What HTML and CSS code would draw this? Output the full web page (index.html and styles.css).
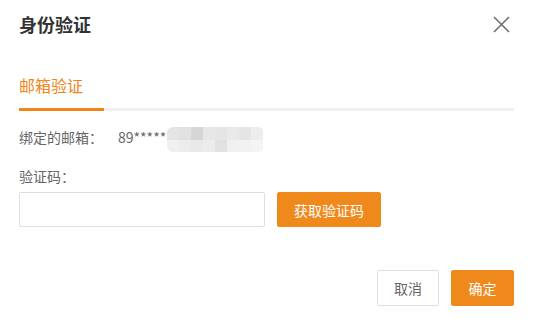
FILE: index.html
```html
<!DOCTYPE html>
<html lang="zh-CN">
<head>
<meta charset="utf-8">
<title>身份验证</title>
<link rel="stylesheet" href="styles.css">
</head>
<body>
<div class="dialog">
  <div class="header">
    <div class="title">身份验证</div>
    <button class="close" aria-label="关闭">
      <svg width="17" height="17" viewBox="0 0 17 17"><path d="M1 1L16 16M16 1L1 16" stroke="#6b6b6b" stroke-width="1.5" fill="none"/></svg>
    </button>
  </div>
  <div class="tabs">
    <div class="tab active">邮箱验证</div>
  </div>
  <div class="email-row">
    <span class="label">绑定的邮箱：</span>
    <span class="value">89*****</span>
    <span class="mosaic">
      <i style="background:#e4e4e4"></i><i style="background:#e1e1e1"></i><i style="background:#d6d6d6"></i><i style="background:#e7e7e7"></i><i style="background:#e5e5e5"></i><i style="background:#e9e9e9"></i><i style="background:#e5e5e5"></i><i style="background:#ededed"></i>
      <i style="background:#f0f0f0"></i><i style="background:#ececec"></i><i style="background:#e9e9e9"></i><i style="background:#ececec"></i><i style="background:#e1e1e1"></i><i style="background:#f0f0f0"></i><i style="background:#f2f2f2"></i><i style="background:#f4f4f4"></i>
    </span>
  </div>
  <div class="code-label">验证码：</div>
  <div class="code-row">
    <input class="code-input" type="text">
    <button class="btn btn-primary btn-send">获取验证码</button>
  </div>
  <div class="footer">
    <button class="btn btn-default">取消</button>
    <button class="btn btn-primary">确定</button>
  </div>
</div>
</body>
</html>
```
FILE: styles.css
```css
* { box-sizing: border-box; }
html, body { margin: 0; padding: 0; background: #fff; }
body {
  font-family: "Noto Sans CJK SC", "Microsoft YaHei", sans-serif;
  color: #666;
  width: 535px;
  height: 319px;
  overflow: hidden;
}
.dialog { padding: 12px 21px 0 19px; }
.header {
  display: flex;
  justify-content: space-between;
  align-items: flex-start;
}
.title {
  font-size: 18px;
  line-height: 24px;
  font-weight: bold;
  color: #333;
}
.close {
  border: 0;
  background: none;
  padding: 0;
  margin: 4px 4px 0 0;
  width: 17px;
  height: 17px;
  display: block;
  cursor: pointer;
}
.close svg { display: block; }
.tabs {
  margin-top: 39px;
  border-bottom: 3px solid #f0f0f0;
  display: flex;
}
.tab {
  width: 85px;
  font-size: 16px;
  line-height: 20px;
  padding-bottom: 13px;
  margin-bottom: -3px;
  color: #f08519;
  border-bottom: 3px solid #f08519;
}
.email-row {
  margin-top: 16px;
  display: flex;
  align-items: flex-start;
  font-size: 14px;
  line-height: 20px;
}
.value { margin-left: 15px; }
.mosaic {
  display: grid;
  grid-template-columns: repeat(8, 12px);
  grid-template-rows: 13px 12px;
  width: 97px;
  border-radius: 6px;
  overflow: hidden;
  margin-left: 1px;
}
.mosaic i { display: block; }
.code-label {
  margin-top: 14px;
  font-size: 14px;
  line-height: 20px;
}
.code-row {
  margin-top: 6px;
  display: flex;
  gap: 12px;
}
.code-input {
  width: 246px;
  height: 35px;
  border: 1px solid #dcdfe6;
  border-radius: 2px;
  outline: none;
  padding: 0 10px;
  font: inherit;
}
.btn {
  height: 36px;
  border-radius: 2px;
  font-family: inherit;
  font-size: 14px;
  padding: 0;
  cursor: pointer;
}
.btn-primary {
  background: #f0891c;
  border: 1px solid #f0891c;
  color: #fff;
}
.btn-default {
  background: #fff;
  border: 1px solid #dcdfe6;
  color: #666;
}
.btn-send { width: 104px; height: 35px; }
.footer {
  margin-top: 43px;
  display: flex;
  justify-content: flex-end;
  gap: 12px;
}
.footer .btn-default { width: 62px; }
.footer .btn-primary { width: 63px; }
```
